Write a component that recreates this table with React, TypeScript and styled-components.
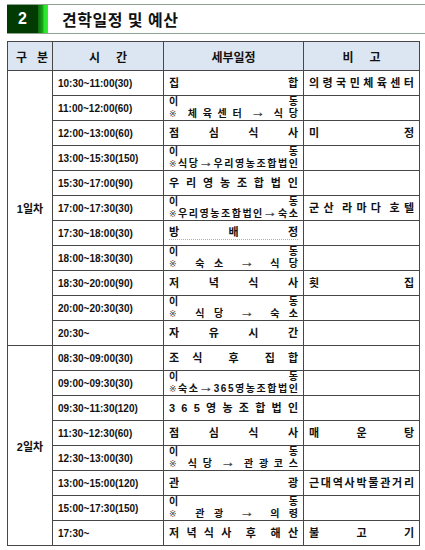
import React from "react";
import styled, {createGlobalStyle} from "styled-components";

const GlobalStyle = createGlobalStyle`
  html, body {
    margin: 0;
    padding: 0;
    background: #fff;
  }
  body {
    font-family: "Liberation Sans", "Noto Sans CJK KR", sans-serif;
    color: #111;
  }
`;

const Page = styled.div`
  width: 425px;
  height: 550px;
  overflow: hidden;
  padding-top: 4px;
  box-sizing: border-box;
`;

const TitleBar = styled.div`
  display: flex;
  align-items: stretch;
  height: 30px;
  margin-left: 7px;
  border-top: 1px solid #8ea48e;
  border-bottom: 1px solid #8ea48e;
  box-sizing: border-box;
`;

const NumBox = styled.div`
  width: 31px;
  background: #013b01;
  color: #fff;
  font-weight: bold;
  font-size: 16px;
  display: flex;
  align-items: center;
  justify-content: center;
`;

const GreenStrip = styled.div`
  width: 10px;
  background: linear-gradient(90deg, #0b6d0b 0%, #17a117 45%, #2be02b 60%, #30f030 100%);
`;

const Title = styled.div`
  margin-left: 14px;
  display: flex;
  align-items: center;
  font-size: 16px;
  font-weight: bold;
  letter-spacing: 0.5px;
  color: #111;
`;

const Table = styled.table`
  margin: 7px 0 0 7px;
  width: 412px;
  table-layout: fixed;
  border-collapse: collapse;
  font-weight: bold;
`;

const HeadCell = styled.th`
  height: 29px;
  padding: 0 8px;
  background: #dce6f2;
  border: 1px solid #474747;
  font-size: 12px;
  font-weight: bold;
  text-align: center;
  box-sizing: border-box;
`;

const HeadLabel = styled.span<{ $gap: number }>`
  display: inline-flex;
  gap: ${p => p.$gap}px;
`;

const Row = styled.tr`
  height: 25px;
`;

const Cell = styled.td<{ $pad?: number }>`
  border: 1px solid #474747;
  padding: 0 ${p => p.$pad ?? 5}px;
  font-size: 10px;
  vertical-align: middle;
  white-space: nowrap;
  overflow: hidden;
`;

const DayCell = styled.td`
  border: 1px solid #474747;
  text-align: center;
  font-size: 11px;
  vertical-align: middle;
`;

const Lines = styled.div`
  display: flex;
  flex-direction: column;
`;

const SpreadLine = styled.div<{ $size: number; $squiggle?: boolean }>`
  display: flex;
  justify-content: space-between;
  align-items: baseline;
  font-size: ${p => p.$size}px;
  line-height: ${p => p.$size + 1.5}px;
  ${p => p.$squiggle && "border-bottom: 1px dotted #f0a050; padding-bottom: 1px;"}
`;

const Glyph = styled.span<{ $symbol?: "arrow" | "mark" }>`
  flex: 0 0 auto;
  ${p => p.$symbol && `
    font-family: "DejaVu Sans", sans-serif;
    font-weight: normal;
    font-size: 0.9em;
    color: #444;
  `}
  ${p => p.$symbol === "arrow" && `
    display: inline-block;
    transform: scaleX(1.35);
    margin: 0 1px;
  `}
`;

const symbolOf = (ch: string) => (ch === "→" ? "arrow" : ch === "※" ? "mark" : undefined);

const Spread = ({text, size = 11, squiggle}: { text: string; size?: number; squiggle?: boolean }) => (
  <SpreadLine $size={size} $squiggle={squiggle}>
    {Array.from(text).map((ch, i) => (
      <Glyph key={i} $symbol={symbolOf(ch)}>{ch === " " ? "" : ch}</Glyph>
    ))}
  </SpreadLine>
);

type Plan = { main: string; sub?: string; squiggle?: boolean };
type Item = { time: string; plan: Plan; note?: string };

const day1: Item[] = [
  {time: "10:30~11:00(30)", plan: {main: "집합"}, note: "의령국민체육센터"},
  {time: "11:00~12:00(60)", plan: {main: "이동", sub: "※ 체육센터 → 식당"}},
  {time: "12:00~13:00(60)", plan: {main: "점심식사"}, note: "미정"},
  {time: "13:00~15:30(150)", plan: {main: "이동", sub: "※식당 → 우리영농조합법인"}},
  {time: "15:30~17:00(90)", plan: {main: "우리영농조합법인"}},
  {time: "17:00~17:30(30)", plan: {main: "이동", sub: "※우리영농조합법인 → 숙소"}, note: "군산 라마다 호텔"},
  {time: "17:30~18:00(30)", plan: {main: "방배정", squiggle: true}},
  {time: "18:00~18:30(30)", plan: {main: "이동", sub: "※ 숙소 → 식당"}},
  {time: "18:30~20:00(90)", plan: {main: "저녁식사"}, note: "횟집"},
  {time: "20:00~20:30(30)", plan: {main: "이동", sub: "※ 식당 → 숙소"}},
  {time: "20:30~", plan: {main: "자유시간"}},
];

const day2: Item[] = [
  {time: "08:30~09:00(30)", plan: {main: "조식 후 집합"}},
  {time: "09:00~09:30(30)", plan: {main: "이동", sub: "※숙소 → 365영농조합법인"}},
  {time: "09:30~11:30(120)", plan: {main: "365영농조합법인"}},
  {time: "11:30~12:30(60)", plan: {main: "점심식사"}, note: "매운탕"},
  {time: "12:30~13:00(30)", plan: {main: "이동", sub: "※ 식당 → 관광코스"}},
  {time: "13:00~15:00(120)", plan: {main: "관광"}, note: "근대역사박물관거리"},
  {time: "15:00~17:30(150)", plan: {main: "이동", sub: "※ 관광 → 의령"}},
  {time: "17:30~", plan: {main: "저녁식사 후 해산"}, note: "불고기"},
];

const PlanContent = ({plan}: { plan: Plan }) => {
  if (plan.sub) {
    return (
      <Lines>
        <Spread text={plan.main} size={10} />
        <Spread text={plan.sub} size={10} />
      </Lines>
    );
  }
  return <Spread text={plan.main} squiggle={plan.squiggle} />;
};

const DayRows = ({label, items}: { label: string; items: Item[] }) => (
  <>
    {items.map((item, i) => (
      <Row key={item.time + i}>
        {i === 0 && <DayCell rowSpan={items.length}>{label}</DayCell>}
        <Cell>{item.time}</Cell>
        <Cell>
          <PlanContent plan={item.plan} />
        </Cell>
        <Cell $pad={5}>{item.note && <Spread text={item.note} />}</Cell>
      </Row>
    ))}
  </>
);

export default function App() {
  return (
    <Page>
      <GlobalStyle />
      <TitleBar>
        <NumBox>2</NumBox>
        <GreenStrip />
        <Title>견학일정 및 예산</Title>
      </TitleBar>
      <Table>
        <colgroup>
          <col style={{width: 45}} />
          <col style={{width: 111}} />
          <col style={{width: 140}} />
          <col style={{width: 116}} />
        </colgroup>
        <thead>
          <tr>
            <HeadCell><HeadLabel $gap={10}><span>구</span><span>분</span></HeadLabel></HeadCell>
            <HeadCell><HeadLabel $gap={16}><span>시</span><span>간</span></HeadLabel></HeadCell>
            <HeadCell><HeadLabel $gap={0}>세부일정</HeadLabel></HeadCell>
            <HeadCell><HeadLabel $gap={16}><span>비</span><span>고</span></HeadLabel></HeadCell>
          </tr>
        </thead>
        <tbody>
          <DayRows label="1일차" items={day1} />
          <DayRows label="2일차" items={day2} />
        </tbody>
      </Table>
    </Page>
  );
}
